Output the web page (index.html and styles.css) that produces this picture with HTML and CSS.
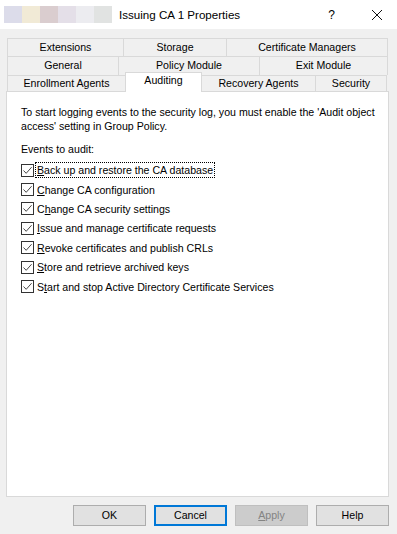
FILE: index.html
```html
<!DOCTYPE html>
<html>

<head>
  <meta http-equiv="Content-Type" content="text/html; charset=UTF-8">
  <title>Issuing CA 1 Properties</title>
  <link rel="stylesheet" href="styles.css">
</head>

<body>

  <div id="titulo">
    <div class="iconos">
      <span class="blur b1"></span><span class="blur b2"></span><span class="blur b3"></span>
      <span class="blur b4"></span><span class="blur b5"></span><span class="blur b6"></span>
    </div>
    <span class="nombre">Issuing CA 1 Properties</span>
    <span class="ayuda">?</span>
    <span class="cerrar">
      <svg width="12" height="12" viewBox="0 0 12 12">
        <path d="M1 1 L11 11 M11 1 L1 11" stroke="#111" stroke-width="1" fill="none" />
      </svg>
    </span>
  </div>

  <div id="hoja">

    <div id="pestanas">
      <div class="fila">
        <div class="tab t-ext">Extensions</div>
        <div class="tab t-sto">Storage</div>
        <div class="tab t-cer">Certificate Managers</div>
      </div>
      <div class="fila">
        <div class="tab t-gen">General</div>
        <div class="tab t-pol">Policy Module</div>
        <div class="tab t-exi">Exit Module</div>
      </div>
      <div class="fila ultima">
        <div class="tab t-enr">Enrollment Agents</div>
        <div class="tab t-aud activa">Auditing</div>
        <div class="tab t-rec">Recovery Agents</div>
        <div class="tab t-sec">Security</div>
      </div>
    </div>

    <div id="panel">
      <p class="intro">
        To start logging events to the security log, you must enable the 'Audit object<br>
        access' setting in Group Policy.
      </p>
      <p class="eventos">Events to audit:</p>

      <div class="lista">
        <div class="opcion"><span class="check"></span><span class="texto foco"><u>B</u>ack up and restore the CA database</span></div>
        <div class="opcion"><span class="check"></span><span class="texto"><u>C</u>hange CA configuration</span></div>
        <div class="opcion"><span class="check"></span><span class="texto">C<u>h</u>ange CA security settings</span></div>
        <div class="opcion"><span class="check"></span><span class="texto"><u>I</u>ssue and manage certificate requests</span></div>
        <div class="opcion"><span class="check"></span><span class="texto"><u>R</u>evoke certificates and publish CRLs</span></div>
        <div class="opcion"><span class="check"></span><span class="texto"><u>S</u>tore and retrieve archived keys</span></div>
        <div class="opcion"><span class="check"></span><span class="texto">S<u>t</u>art and stop Active Directory Certificate Services</span></div>
      </div>
    </div>

    <div id="botones">
      <div class="boton">OK</div>
      <div class="boton defecto">Cancel</div>
      <div class="boton apagado"><u>A</u>pply</div>
      <div class="boton">Help</div>
    </div>

  </div>

</body>

</html>
```

FILE: styles.css
```css
html,
body {
  margin: 0;
  padding: 0;
}

body {
  width: 397px;
  height: 534px;
  background: #f0f0f0;
  font-family: "Liberation Sans", Arial, sans-serif;
  font-size: 10.6px;
  color: #000;
  overflow: hidden;
}

#titulo {
  height: 29px;
  background: #fff;
  display: flex;
  align-items: center;
}

.iconos {
  display: flex;
  margin-left: 4px;
  height: 17px;
}

.blur {
  display: block;
  width: 18px;
  height: 17px;
}

.b1 { background: #dcdcea; }
.b2 { background: #f1ead6; }
.b3 { background: #dacdcf; }
.b4 { background: #e4dfe8; }
.b5 { background: #ececf0; }
.b6 { background: #e1e3e2; }

.nombre {
  margin-left: 7px;
  font-size: 11.6px;
}

.ayuda {
  margin-left: 88px;
  font-size: 12px;
}

.cerrar {
  margin-left: 36px;
  display: flex;
}

#hoja {
  padding: 9px 0 0 6px;
}

#pestanas {
  margin-left: 1px;
}

.fila {
  display: flex;
  height: 18px;
}

.fila + .fila {
  height: 19px;
}

.tab {
  box-sizing: border-box;
  border: 1px solid #d9d9d9;
  border-bottom: none;
  margin-right: -1px;
  text-align: center;
  line-height: 17px;
  background: #f0f0f0;
}

.t-ext { width: 117px; }
.t-sto { width: 104px; }
.t-cer { width: 162px; }
.t-gen { width: 112px; }
.t-pol { width: 142px; }
.t-exi { width: 129px; }
.t-enr { width: 119px; }
.t-aud { width: 77px; }
.t-rec { width: 115px; }
.t-sec { width: 72px; }

.fila.ultima {
  height: 16px;
  align-items: flex-end;
}

.fila.ultima .tab {
  height: 16px;
  line-height: 15px;
}

.fila.ultima .tab.activa {
  height: 20px;
  line-height: 14px;
  background: #fff;
  margin-bottom: -1px;
  z-index: 2;
}

#panel {
  box-sizing: border-box;
  width: 383px;
  height: 406px;
  background: #fff;
  border: 1px solid #d9d9d9;
  padding: 13px 14px 0 14px;
}

#panel p {
  margin: 0;
  line-height: 14px;
  white-space: nowrap;
}

#panel .eventos {
  margin-top: 9px;
}

.lista {
  margin-top: 4.5px;
}

.opcion {
  height: 19.4px;
  display: flex;
  align-items: center;
}

.check {
  box-sizing: border-box;
  width: 13px;
  height: 13px;
  border: 1px solid #333;
  background: #fff url("data:image/svg+xml,%3Csvg xmlns='http://www.w3.org/2000/svg' width='11' height='11'%3E%3Cpath d='M1.5 5.5 L4.2 8.3 L9.6 2.2' stroke='%23333' stroke-width='0.9' fill='none'/%3E%3C/svg%3E") no-repeat center;
}

.texto {
  margin-left: 2px;
  padding: 0 1px;
  line-height: 14px;
}

.foco {
  outline: 1px dotted #000;
  outline-offset: 0;
}

#botones {
  display: flex;
  justify-content: flex-end;
  gap: 8px;
  width: 383px;
  margin-top: 8px;
}

.boton {
  box-sizing: border-box;
  width: 73px;
  height: 21px;
  background: #e1e1e1;
  border: 1px solid #adadad;
  text-align: center;
  line-height: 19px;
}

.boton.defecto {
  border: 2px solid #0078d7;
  line-height: 17px;
}

.boton.apagado {
  background: #cccccc;
  border-color: #bfbfbf;
  color: #838383;
}
```
